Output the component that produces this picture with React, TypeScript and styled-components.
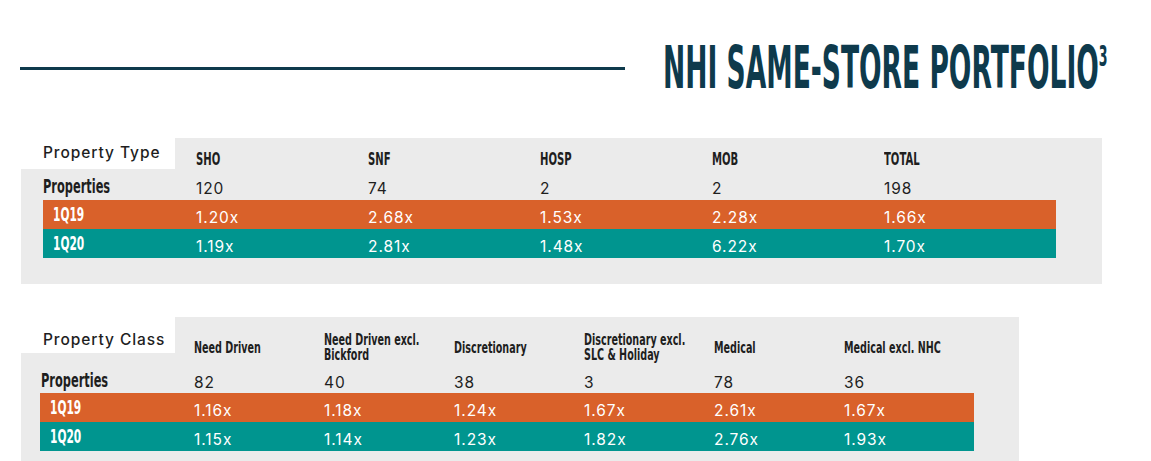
import React from "react";
import styled, { createGlobalStyle } from "styled-components";

const NAVY = "#0e3a4c";
const GREY = "#ebebeb";
const ORANGE = "#d9612a";
const TEAL = "#00958f";
const INK = "#1e1e1e";
const COND = `"DejaVu Sans", "Liberation Sans", sans-serif`;
const SANS = `Inter, "Open Sans", "Liberation Sans", sans-serif`;

const Global = createGlobalStyle`
  html, body { margin: 0; padding: 0; background: #fff; overflow: hidden; }
  body { font-family: ${SANS}; color: ${INK}; }
`;

const Sheet = styled.main`
  width: 1151px;
  padding-top: 39px;
`;

const TitleBar = styled.header`
  display: flex;
  align-items: center;
  gap: 38px;
  height: 59px;
  padding-left: 20px;
`;

const Rule = styled.div`
  flex-shrink: 0;
  width: 605px;
  height: 3px;
  background: ${NAVY};
`;

const TitleBox = styled.div`
  flex-shrink: 0;
  display: flex;
  align-items: center;
  height: 59px;
`;

/* Condensed look: glyphs are set small and stretched vertically, so the
   layout width of the text equals its visual width. */
const Title = styled.h1`
  margin: 0;
  display: inline-block;
  font-family: ${COND};
  font-weight: 700;
  font-size: 26.55px;
  line-height: 26.55px;
  color: ${NAVY};
  white-space: nowrap;
  transform: scaleY(2.2222);
  transform-origin: center center;
`;

const Sup = styled.sup`
  font-size: 12.6px;
  line-height: 0;
  vertical-align: 9.9px;
`;

const Panel = styled.section<{ $width: number; $inset: number; $gap: number; $pb: number }>`
  box-sizing: border-box;
  width: ${(p) => p.$width}px;
  margin: ${(p) => p.$gap}px 0 0 21px;
  padding: 0 0 ${(p) => p.$pb}px ${(p) => p.$inset}px;
  background: ${GREY};
`;

const Grid = styled.div<{ $cols: string; $h: number }>`
  display: grid;
  width: fit-content;
  grid-template-columns: ${(p) => p.$cols};
  height: ${(p) => p.$h}px;
  align-items: end;
`;

const Band = styled(Grid)<{ $tone: string }>`
  background: ${(p) => p.$tone};
  color: #fff;
`;

const Notch = styled.div<{ $inset: number; $h: number; $pb: number }>`
  align-self: start;
  box-sizing: border-box;
  display: flex;
  align-items: flex-end;
  width: 154px;
  height: ${(p) => p.$h}px;
  margin-left: -${(p) => p.$inset}px;
  padding: 0 0 ${(p) => p.$pb}px 22px;
  background: #fff;
  font-family: ${SANS};
  font-weight: 500;
  font-size: 15.5px;
  letter-spacing: 0.06em;
  line-height: 18px;
  color: ${INK};
  white-space: nowrap;
`;

const ColHead = styled.div<{ $pt: number; $pb: number; $align: string }>`
  align-self: stretch;
  box-sizing: border-box;
  display: flex;
  align-items: ${(p) => p.$align};
  min-width: 0;
  padding: ${(p) => p.$pt}px 0 ${(p) => p.$pb}px;
  font-family: ${COND};
  font-weight: 700;
  color: ${INK};
`;

const Squeeze = styled.span<{ $k: number; $size: number; $lh: number; $origin: string }>`
  display: inline-block;
  white-space: nowrap;
  font-size: ${(p) => p.$size * p.$k}px;
  line-height: ${(p) => p.$lh * p.$k}px;
  transform: scaleY(${(p) => 1 / p.$k});
  transform-origin: ${(p) => p.$origin};
`;

const RowLabel = styled.div<{ $pad: number; $pb: number }>`
  display: flex;
  align-items: flex-end;
  min-width: 0;
  padding: 0 0 ${(p) => p.$pb}px ${(p) => p.$pad}px;
  font-family: ${COND};
  font-weight: 700;
  white-space: nowrap;
`;

const Value = styled.div<{ $pb: number }>`
  min-width: 0;
  padding-bottom: ${(p) => p.$pb}px;
  font-family: ${SANS};
  font-weight: 400;
  font-size: 15.5px;
  letter-spacing: 0.06em;
  line-height: 18px;
  white-space: nowrap;
`;

type TableSpec = {
  caption: string;
  heads: string[][];
  props: string[];
  q19: string[];
  q20: string[];
};

const typeTable: TableSpec = {
  caption: "Property Type",
  heads: [["SHO"], ["SNF"], ["HOSP"], ["MOB"], ["TOTAL"]],
  props: ["120", "74", "2", "2", "198"],
  q19: ["1.20x", "2.68x", "1.53x", "2.28x", "1.66x"],
  q20: ["1.19x", "2.81x", "1.48x", "6.22x", "1.70x"],
};

const classTable: TableSpec = {
  caption: "Property Class",
  heads: [
    ["Need Driven"],
    ["Need Driven excl.", "Bickford"],
    ["Discretionary"],
    ["Discretionary excl.", "SLC & Holiday"],
    ["Medical"],
    ["Medical excl. NHC"],
  ],
  props: ["82", "40", "38", "3", "78", "36"],
  q19: ["1.16x", "1.18x", "1.24x", "1.67x", "2.61x", "1.67x"],
  q20: ["1.15x", "1.14x", "1.23x", "1.82x", "2.76x", "1.93x"],
};

function Label({ text, k }: { text: string; k: number }) {
  return (
    <Squeeze $k={k} $size={19} $lh={19} $origin="left bottom">
      {text}
    </Squeeze>
  );
}

function Head({
  lines,
  k,
  size,
  lh,
  origin,
}: {
  lines: string[];
  k: number;
  size: number;
  lh: number;
  origin: string;
}) {
  return (
    <Squeeze $k={k} $size={size} $lh={lh} $origin={origin}>
      {lines.map((l, i) => (
        <React.Fragment key={i}>
          {i > 0 && <br />}
          {l}
        </React.Fragment>
      ))}
    </Squeeze>
  );
}

export default function App() {
  const topCols = "153px repeat(5, 172px)";
  const botCols = "154px repeat(6, 130px)";
  return (
    <>
      <Global />
      <Sheet>
        <TitleBar>
          <Rule />
          <TitleBox>
            <Title>
              NHI SAME-STORE PORTFOLIO<Sup>3</Sup>
            </Title>
          </TitleBox>
        </TitleBar>

        <Panel $width={1081} $inset={22} $gap={40} $pb={26}>
          <Grid $cols={topCols} $h={34}>
            <Notch $inset={22} $h={31} $pb={7}>
              {typeTable.caption}
            </Notch>
            {typeTable.heads.map((h, i) => (
              <ColHead key={i} $pt={0} $pb={3} $align="flex-end">
                <Head lines={h} k={0.56} size={18} lh={18} origin="left bottom" />
              </ColHead>
            ))}
          </Grid>
          <Grid $cols={topCols} $h={28}>
            <RowLabel $pad={0} $pb={3}>
              <Label text="Properties" k={0.6} />
            </RowLabel>
            {typeTable.props.map((v, i) => (
              <Value key={i} $pb={2}>{v}</Value>
            ))}
          </Grid>
          <Band $cols={topCols} $h={29} $tone={ORANGE}>
            <RowLabel $pad={10} $pb={3}>
              <Label text="1Q19" k={0.56} />
            </RowLabel>
            {typeTable.q19.map((v, i) => (
              <Value key={i} $pb={2}>{v}</Value>
            ))}
          </Band>
          <Band $cols={topCols} $h={29} $tone={TEAL}>
            <RowLabel $pad={10} $pb={3}>
              <Label text="1Q20" k={0.56} />
            </RowLabel>
            {typeTable.q20.map((v, i) => (
              <Value key={i} $pb={2}>{v}</Value>
            ))}
          </Band>
        </Panel>

        <Panel $width={998} $inset={19} $gap={33} $pb={10}>
          <Grid $cols={botCols} $h={47}>
            <Notch $inset={19} $h={36} $pb={4}>
              {classTable.caption}
            </Notch>
            {classTable.heads.map((h, i) => (
              <ColHead key={i} $pt={15} $pb={0} $align="center">
                <Head lines={h} k={0.64} size={15} lh={16} origin="left center" />
              </ColHead>
            ))}
          </Grid>
          <Grid $cols={botCols} $h={29}>
            <RowLabel $pad={1} $pb={2}>
              <Label text="Properties" k={0.6} />
            </RowLabel>
            {classTable.props.map((v, i) => (
              <Value key={i} $pb={1}>{v}</Value>
            ))}
          </Grid>
          <Band $cols={botCols} $h={29} $tone={ORANGE}>
            <RowLabel $pad={10} $pb={3}>
              <Label text="1Q19" k={0.56} />
            </RowLabel>
            {classTable.q19.map((v, i) => (
              <Value key={i} $pb={2}>{v}</Value>
            ))}
          </Band>
          <Band $cols={botCols} $h={29} $tone={TEAL}>
            <RowLabel $pad={10} $pb={3}>
              <Label text="1Q20" k={0.56} />
            </RowLabel>
            {classTable.q20.map((v, i) => (
              <Value key={i} $pb={2}>{v}</Value>
            ))}
          </Band>
        </Panel>
      </Sheet>
    </>
  );
}
